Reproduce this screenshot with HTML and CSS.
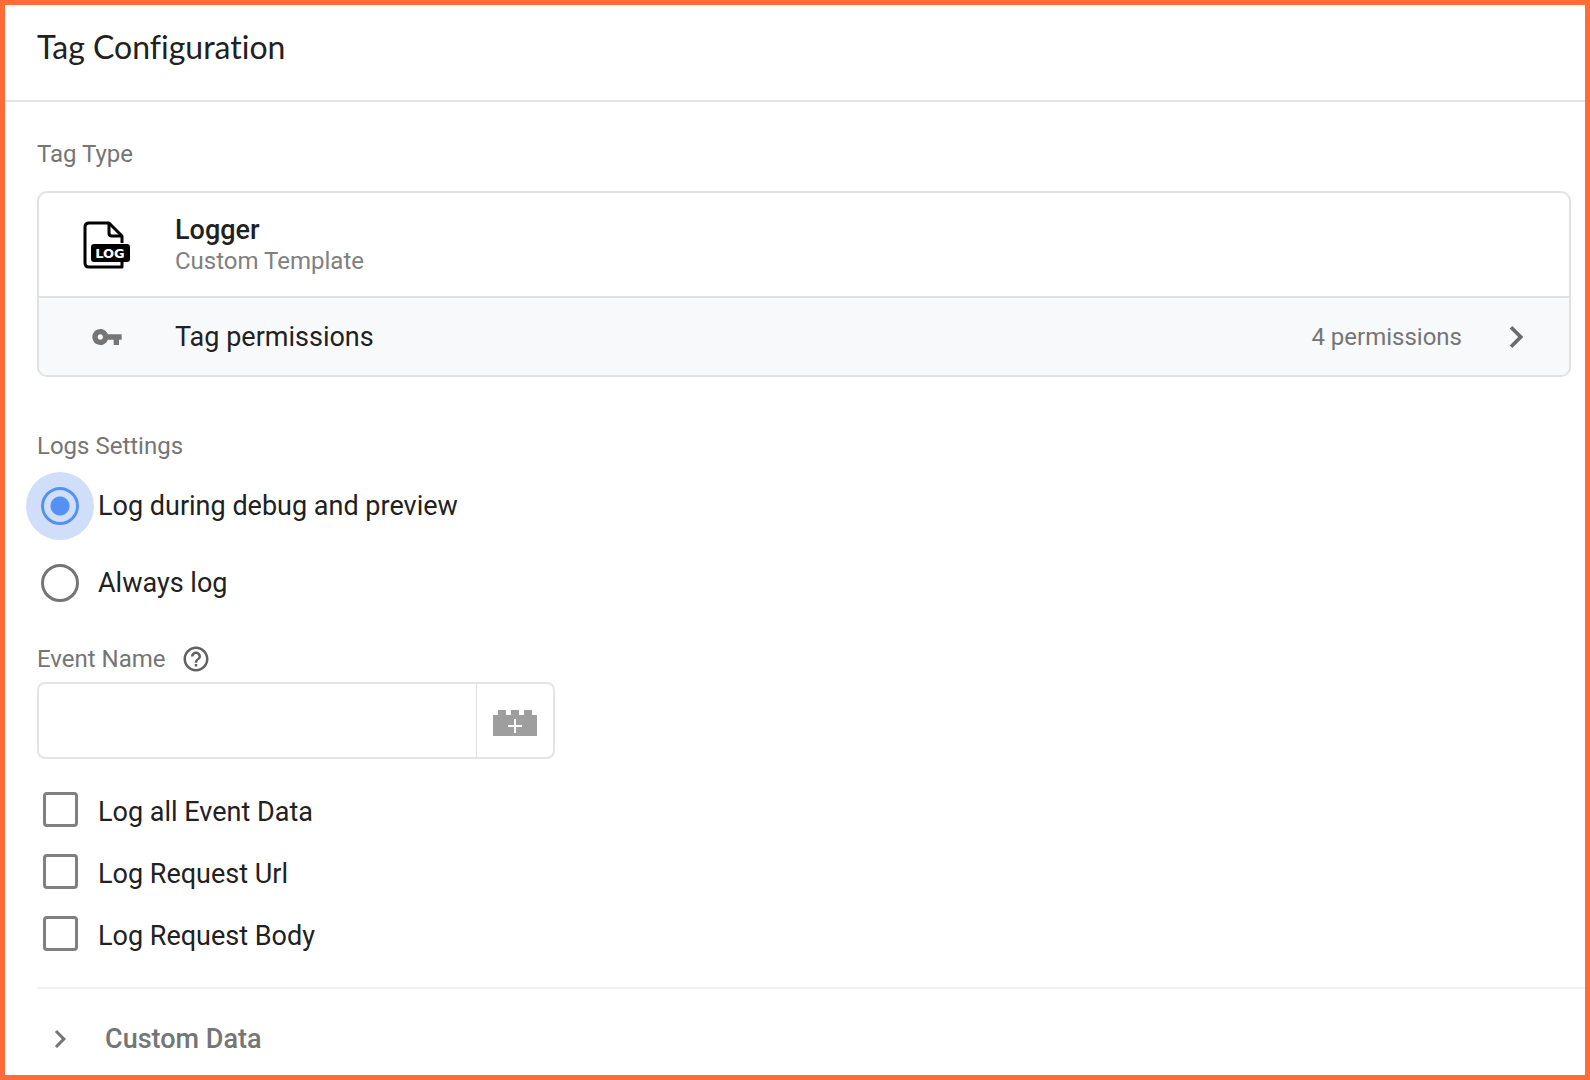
FILE: index.html
```html
<!DOCTYPE html>
<html lang="en">
    <head>
        <meta charset="utf-8">
        <title>Tag Configuration</title>
        <link rel="stylesheet" href="styles.css">
    </head>
    <body>
        <header class="header">
            <h1>Tag Configuration</h1>
        </header>

        <main class="content">
            <h2 class="caption">Tag Type</h2>
            <div class="card">
                <div class="cardRow typeRow">
                    <svg class="logIcon" width="48" height="48" viewBox="0 0 48 48" aria-hidden="true">
                        <path d="M39 22V15L26 2H6Q2 2 2 6V42Q2 46 6 46H39V38" fill="none" stroke="#000" stroke-width="3" stroke-linejoin="round"/>
                        <path d="M26 2V12Q26 15 29 15H39" fill="none" stroke="#000" stroke-width="3"/>
                        <rect x="8" y="23" width="39" height="18" rx="3"/>
                        <text class="logText" x="27" y="37" text-anchor="middle">LOG</text>
                    </svg>
                    <div>
                        <div class="tagName">Logger</div>
                        <div class="tagSub">Custom Template</div>
                    </div>
                </div>
                <button class="cardRow permRow" type="button">
                    <svg width="32" height="32" viewBox="0 0 24 24" fill="#757575" aria-hidden="true">
                        <path d="M12.65 10C11.83 7.67 9.61 6 7 6c-3.31 0-6 2.69-6 6s2.69 6 6 6c2.61 0 4.83-1.67 5.65-4H17v4h4v-4h2v-4H12.65zM7 14c-1.1 0-2-.9-2-2s.9-2 2-2 2 .9 2 2-.9 2-2 2z"/>
                    </svg>
                    <span>Tag permissions</span>
                    <span class="permCount">4 permissions</span>
                    <svg width="44" height="44" viewBox="0 0 24 24" fill="#6b6b6b" aria-hidden="true">
                        <path d="M10 6L8.59 7.41 13.17 12l-4.58 4.59L10 18l6-6z"/>
                    </svg>
                </button>
            </div>

            <h2 class="caption" id="logsTitle">Logs Settings</h2>
            <div class="radios" role="radiogroup" aria-labelledby="logsTitle">
                <label class="radioRow"><input class="radio" type="radio" name="logs" value="debug" checked>Log during debug and preview</label>
                <label class="radioRow"><input class="radio" type="radio" name="logs" value="always">Always log</label>
            </div>

            <div class="fieldLabel">
                <label class="caption" for="eventName">Event Name</label>
                <button class="plainBtn" type="button" aria-label="Help">
                    <svg width="30" height="30" viewBox="0 0 24 24" fill="#616161">
                        <path d="M11 18h2v-2h-2v2zm1-16C6.48 2 2 6.48 2 12s4.48 10 10 10 10-4.48 10-10S17.52 2 12 2zm0 18c-4.41 0-8-3.59-8-8s3.59-8 8-8 8 3.59 8 8-3.59 8-8 8zm0-14c-2.21 0-4 1.79-4 4h2c0-1.1.9-2 2-2s2 .9 2 2c0 2-3 1.75-3 5h2c0-2.25 3-2.5 3-5 0-2.21-1.79-4-4-4z"/>
                    </svg>
                </button>
            </div>
            <div class="field">
                <input class="fieldInput" type="text" id="eventName">
                <button class="plainBtn varBtn" type="button" aria-label="Insert variable">
                    <svg width="44" height="26" viewBox="0 0 44 26">
                        <path d="M0 5H5V0H13V5H18V0H26V5H31V0H39V5H44V26H0Z" fill="#9e9e9e"/>
                        <path d="M22 9V23M15 16H29" stroke="#fff" stroke-width="2"/>
                    </svg>
                </button>
            </div>

            <div class="checks">
                <label class="checkRow"><input class="check" type="checkbox">Log all Event Data</label>
                <label class="checkRow"><input class="check" type="checkbox">Log Request Url</label>
                <label class="checkRow"><input class="check" type="checkbox">Log Request Body</label>
            </div>
        </main>

        <section class="group">
            <button class="groupBtn" type="button" aria-expanded="false">
                <svg width="36" height="36" viewBox="0 0 24 24" fill="#757575" aria-hidden="true">
                    <path d="M10 6L8.59 7.41 13.17 12l-4.58 4.59L10 18l6-6z"/>
                </svg>
                <span>Custom Data</span>
            </button>
        </section>
    </body>
</html>
```
FILE: styles.css
```css
* {
    box-sizing: border-box;
}

body {
    margin: 0;
    min-height: 100vh;
    border: 5px solid #ff6c37;
    background-color: #fff;
    color: #212121;
    font-family: Roboto, "Liberation Sans", sans-serif;
    font-size: 27px;
    line-height: 30px;
}

button, input {
    font: inherit;
    color: inherit;
}

h1, h2 {
    margin: 0;
    font-weight: 400;
}

.header {
    padding: 22px 32px 33px;
    border-bottom: 2px solid #e4e4e4;
}

.header h1 {
    font-family: Lato, sans-serif;
    font-size: 32px;
    font-variant-ligatures: none;
    line-height: 40px;
}

.content {
    padding: 38px 14px 31px 32px;
}

.caption {
    color: #757575;
    font-size: 24px;
    line-height: 28px;
}

/* tag type card */
.card {
    margin: 23px 0 55px;
    border: 2px solid #dfe1e2;
    border-radius: 10px;
    overflow: hidden;
}

.cardRow {
    display: grid;
    grid-template-columns: 136px 1fr auto auto;
    align-items: center;
    width: 100%;
}

.cardRow > svg:first-child {
    justify-self: center;
}

.typeRow {
    min-height: 103px;
}

.logText {
    fill: #fff;
    font-family: "DejaVu Sans", sans-serif;
    font-size: 13px;
    font-weight: 700;
}

.tagName {
    font-weight: 500;
}

.tagSub {
    margin-top: 2px;
    color: #808080;
    font-size: 24px;
    line-height: 28px;
}

.permRow {
    min-height: 79px;
    padding: 0 31px 0 0;
    border: 0;
    border-top: 2px solid #dfe1e2;
    background-color: #f8f9fb;
    text-align: left;
}

.permCount {
    margin-right: 32px;
    color: #757575;
    font-size: 24px;
}

/* radio buttons */
.radios {
    margin: 7px 0 24px;
}

.radioRow {
    display: flex;
    align-items: center;
    gap: 19px;
    height: 77px;
    padding-left: 4px;
}

.radio {
    appearance: none;
    width: 38px;
    height: 38px;
    margin: 0;
    border: 3px solid #757575;
    border-radius: 50%;
}

.radio:checked {
    border-color: #5491f5;
    background: radial-gradient(circle, #5491f5 9px, #d0defa 10px);
    box-shadow: 0 0 0 15px #d0defa;
}

/* event name */
.fieldLabel {
    display: flex;
    align-items: center;
    gap: 15px;
    height: 28px;
}

.plainBtn {
    display: flex;
    align-items: center;
    justify-content: center;
    padding: 0;
    border: 0;
    background: none;
}

.field {
    display: flex;
    width: 100%;
    max-width: 518px;
    height: 77px;
    margin: 9px 0 33px;
    border: 2px solid #e4e4e4;
    border-radius: 8px;
}

.fieldInput {
    flex: 1;
    min-width: 0;
    padding: 0 16px;
    border: 0;
    outline: 0;
    background: none;
}

.varBtn {
    width: 77px;
    padding-top: 4px;
    border-left: 1px solid #e0e0e0;
}

/* check boxes */
.checks {
    display: flex;
    flex-direction: column;
    gap: 22px;
}

.checkRow {
    display: flex;
    align-items: flex-start;
    gap: 20px;
    padding-left: 6px;
    line-height: 40px;
}

.check {
    appearance: none;
    width: 35px;
    height: 35px;
    margin: 0;
    border: 3px solid #808080;
    border-radius: 4px;
}

.check:checked {
    border-color: #5491f5;
    background-color: #5491f5;
}

/* collapsed group */
.group {
    margin-left: 32px;
    border-top: 2px solid #f0f0f0;
}

.groupBtn {
    display: flex;
    align-items: center;
    gap: 27px;
    padding: 32px 0 16px 5px;
    border: 0;
    background: none;
    color: #757575;
    font-weight: 500;
}
```
